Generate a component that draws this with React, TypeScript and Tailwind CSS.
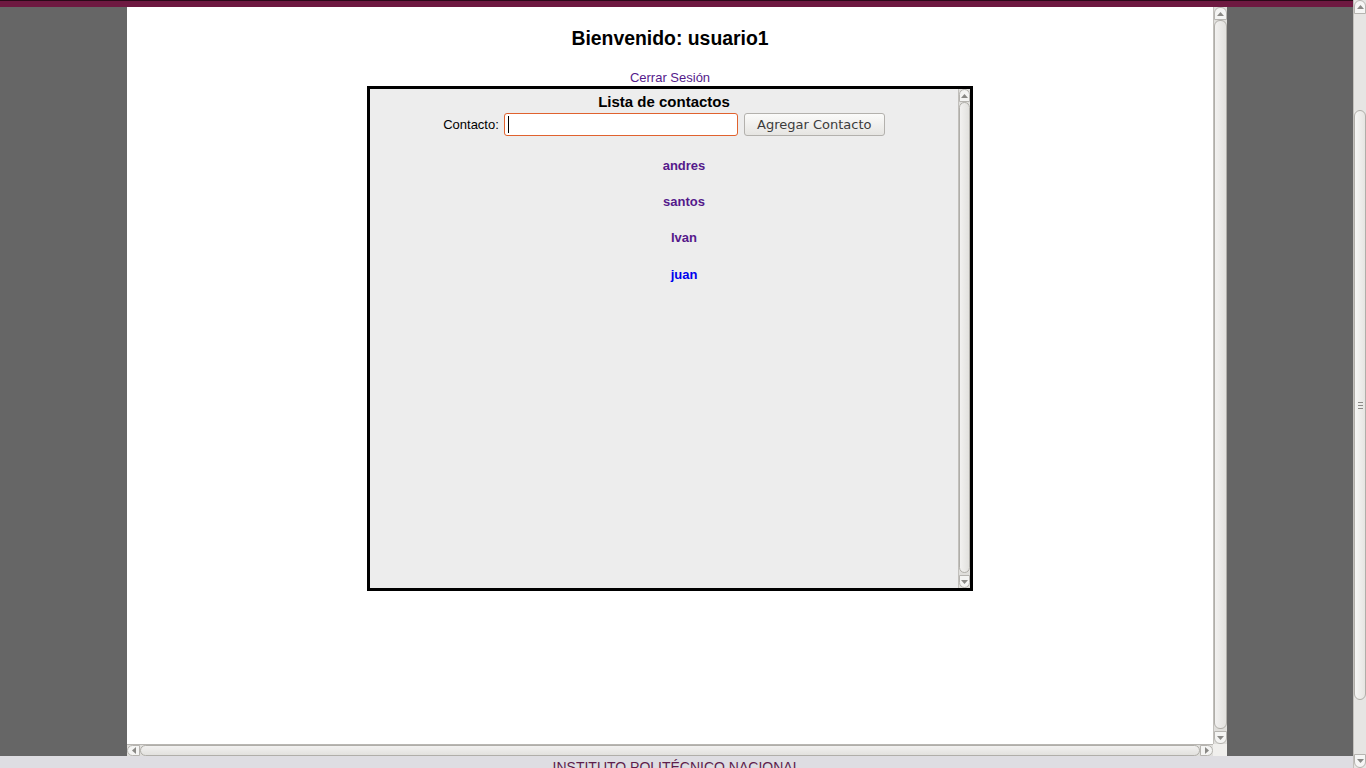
import React from "react";

const ArrowUp = () => (
  <svg width="7" height="4" viewBox="0 0 7 4">
    <path d="M0 4 L3.5 0 L7 4 Z" fill="#8a8986" />
  </svg>
);

const ArrowDown = () => (
  <svg width="7" height="4" viewBox="0 0 7 4">
    <path d="M0 0 L3.5 4 L7 0 Z" fill="#8a8986" />
  </svg>
);

const ArrowLeft = () => (
  <svg width="4" height="7" viewBox="0 0 4 7">
    <path d="M4 0 L0 3.5 L4 7 Z" fill="#8a8986" />
  </svg>
);

const ArrowRight = () => (
  <svg width="4" height="7" viewBox="0 0 4 7">
    <path d="M0 0 L4 3.5 L0 7 Z" fill="#8a8986" />
  </svg>
);

interface VScrollProps {
  width: string;
  after: string;
}

const VScroll: React.FC<VScrollProps> = ({ width, after }) => {
  return (
    <div className={`${width} flex h-full flex-col border-l border-[#c2c0bc] bg-[#dfdedb]`}>
      <div className="flex h-[13px] shrink-0 items-center justify-center rounded-t-[6px] border border-[#b6b4b0] bg-[#f4f4f3]">
        <ArrowUp />
      </div>
      <div className="flex-1 rounded-[6px] border border-[#b0aea9] bg-gradient-to-r from-[#f2f1f0] to-[#e2e1de]" />
      <div className={`${after} shrink-0`} />
      <div className="flex h-[13px] shrink-0 items-center justify-center rounded-b-[6px] border border-[#b6b4b0] bg-[#f4f4f3]">
        <ArrowDown />
      </div>
    </div>
  );
};

const contacts = [
  { name: "andres", visited: true, extra: "" },
  { name: "santos", visited: true, extra: "" },
  { name: "Ivan", visited: true, extra: "" },
  { name: "juan", visited: false, extra: "mt-px" },
];

export default function App() {
  return (
    <div className="flex h-[768px] w-[1366px] overflow-hidden bg-[#666666] font-['Liberation_Sans',Arial,sans-serif]">
      <div className="flex w-[1353px] flex-col">
        <div className="h-[7px] border-t border-[#2b0a19] bg-[#6e1941]" />

        <div className="flex h-[737px]">
          <div className="w-[127px]" />
          <main className="flex w-[1086px] flex-col items-center bg-white pt-[19px]">
            <h1 className="text-[19.4px] leading-6 font-bold text-black">Bienvenido: usuario1</h1>
            <a href="#" className="mt-[20px] text-[13px] leading-4 text-[#551a8b]">
              Cerrar Sesión
            </a>
            <div className="flex h-[505px] w-[606px] border-[3px] border-black bg-[#ededed]">
              <div className="flex flex-1 flex-col items-center pt-[4px]">
                <h2 className="text-[15px] leading-[18px] font-bold text-black">Lista de contactos</h2>
                <div className="mt-[2px] flex items-center">
                  <label className="mr-[5px] text-[13px] text-black">Contacto:</label>
                  <div className="flex h-[23px] w-[234px] items-center rounded-[3px] border border-[#e0622e] bg-white pl-[3px]">
                    <span className="h-[17px] w-px bg-black" />
                  </div>
                  <button className="ml-[6px] h-[23px] w-[141px] rounded-[3px] border border-[#b3b1ad] bg-gradient-to-b from-[#fbfbfa] to-[#e6e5e2] font-['DejaVu_Sans',sans-serif] text-[13px] text-[#3c3c3c]">
                    Agregar Contacto
                  </button>
                </div>
                <ul className="mt-[22px] flex w-full flex-col gap-[20px] pl-10 text-center">
                  {contacts.map((c) => (
                    <li key={c.name} className={`${c.extra} text-[13px] leading-4 font-bold`}>
                      <a href="#" className={c.visited ? "text-[#551a8b]" : "text-[#0000ee]"}>
                        {c.name}
                      </a>
                    </li>
                  ))}
                </ul>
              </div>
              <VScroll width="w-[12px]" after="h-[2px]" />
            </div>
          </main>
          <VScroll width="w-[14px]" after="h-[2px]" />
          <div className="flex-1" />
        </div>

        <div className="flex h-[12px]">
          <div className="w-[127px]" />
          <div className="flex w-[1086px] border-t border-[#b8b6b2] bg-[#dfdedb]">
            <div className="flex w-[13px] items-center justify-center rounded-l-[6px] border border-[#b6b4b0] bg-[#f4f4f3]">
              <ArrowLeft />
            </div>
            <div className="flex-1 rounded-[6px] border border-[#b0aea9] bg-gradient-to-b from-[#f2f1f0] to-[#e2e1de]" />
            <div className="flex w-[13px] items-center justify-center rounded-r-[6px] border border-[#b6b4b0] bg-[#f4f4f3]">
              <ArrowRight />
            </div>
          </div>
          <div className="w-[14px] bg-[#f0efed]" />
        </div>

        <footer className="h-[12px] overflow-hidden bg-[#dedde2] pt-[3px] text-center text-[14px] leading-4 text-[#5e1d4c]">
          INSTITUTO POLITÉCNICO NACIONAL
        </footer>
      </div>

      <div className="flex w-[13px] flex-col border-l border-[#c2c0bc] bg-[#e6e5e3]">
        <div className="flex h-[14px] shrink-0 items-center justify-center rounded-t-[6px] border border-[#b6b4b0] bg-[#f6f6f5]">
          <ArrowUp />
        </div>
        <div className="h-[96px] shrink-0" />
        <div className="flex h-[590px] shrink-0 flex-col items-center justify-center gap-[2px] rounded-[6px] border border-[#b0aea9] bg-gradient-to-r from-[#f6f6f5] to-[#e6e5e2]">
          <span className="h-px w-[5px] bg-[#8d8b88]" />
          <span className="h-px w-[5px] bg-[#8d8b88]" />
          <span className="h-px w-[5px] bg-[#8d8b88]" />
        </div>
        <div className="flex-1" />
        <div className="flex h-[14px] shrink-0 items-center justify-center rounded-b-[6px] border border-[#b6b4b0] bg-[#f6f6f5]">
          <ArrowDown />
        </div>
      </div>
    </div>
  );
}
